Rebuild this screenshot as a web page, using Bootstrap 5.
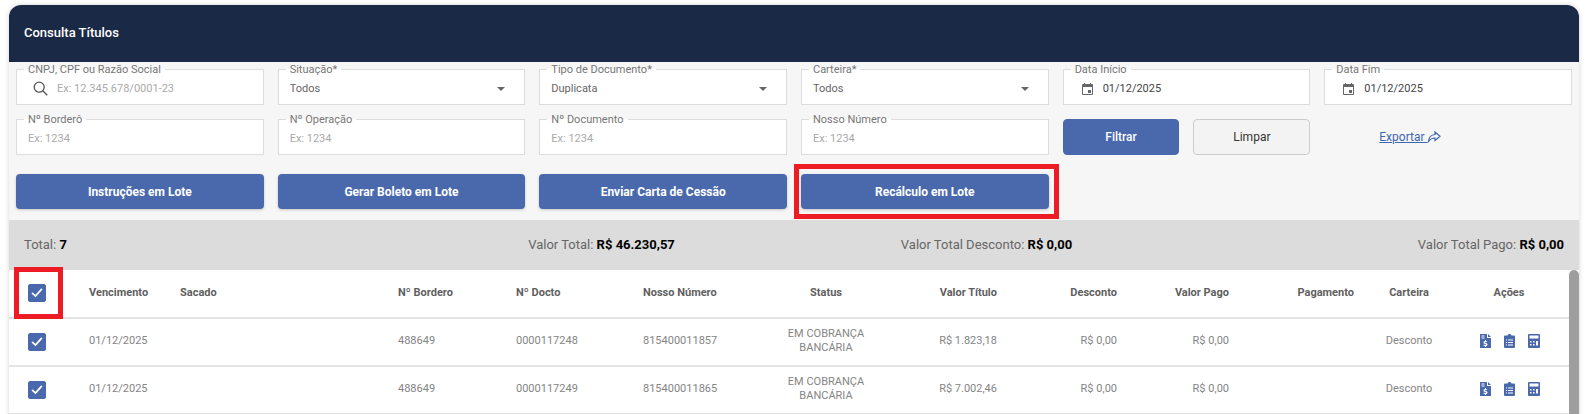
<!DOCTYPE html>
<html lang="pt-BR">
<head>
<meta charset="utf-8">
<title>Consulta Títulos</title>
<link href="https://cdn.jsdelivr.net/npm/bootstrap@5.3.0/dist/css/bootstrap.min.css" rel="stylesheet">
<style>
html,body{height:414px;overflow:hidden;background:#fff;}
body{font-family:Roboto,"Liberation Sans",sans-serif;font-size:11px;color:#666;}
.sheet{margin:5px 9px 0;border:0;border-radius:12px 12px 0 0;box-shadow:0 0 5px rgba(0,0,0,.18);overflow:hidden;height:420px;background:#fff;}
.sheet-head{height:57px;background:#1a2945;color:#fff;font-size:13px;font-weight:500;padding:0 15px 2px;border:0;border-radius:0!important;}
.filters{background:#f6f6f6;padding:0 7px 11px;position:relative;}
.filters .row{--bs-gutter-x:14px;--bs-gutter-y:0;}
.gap-row{margin-top:7px;}
.btn-row{margin-top:19px;}
.outfield{height:43px;margin:0;padding:0 11px 4px;min-width:0;background:#fff;border:1px solid #dcdcdc;display:flex;align-items:center;}
.outfield legend{float:none;width:auto;padding:1px 4px 0;font-size:11px;line-height:14px;color:#777;margin:0 0 0 -4px;}
.outfield input,.outfield select{border:0;outline:0;background:transparent;padding:0;font-size:11px;color:#666;height:20px;width:100%;min-width:0;appearance:none;box-shadow:none;border-radius:0;font-family:inherit;}
.outfield input::placeholder{color:#aaa;opacity:1;}
.outfield select{margin-top:2px;}
.outfield .dateval{color:#444;}
.fieldicon{flex:none;display:block;}
.searchmark{margin:0 9px 0 5px;}
.datemark{margin:0 10px 0 7px;}
.caretdown{flex:none;width:0;height:0;border-left:4.500px solid transparent;border-right:4.500px solid transparent;border-top:4px solid #666;margin-right:8px;}
.blue-btn{background:#4a69ad;border:0;color:#fff;font-size:12px;font-weight:700;height:35px;width:100%;border-radius:4px;padding:0;box-shadow:0 1px 3px rgba(0,0,0,.2);}
.blue-btn:hover{background:#4a69ad;color:#fff;}
.act-btn{height:36px;font-size:12px;border-radius:4px;padding:0;width:100%;font-weight:500;}
.act-primary{background:#4a69ad;border:1px solid #4a69ad;color:#fff;}
.act-plain{background:#f3f3f3;border:1px solid #ccc;color:#333;font-weight:400;}
.export-link{color:#3f66b3;font-size:12px;text-decoration:underline;padding-left:55px;height:36px;display:flex;align-items:center;}
.export-link svg{margin-left:-1px;}
.flagbox{position:absolute;border:5px solid #ed1c24;pointer-events:none;}
.flag-btn{left:-7px;right:-10px;top:-10px;bottom:-10px;}
.flag-chk{left:-14px;top:-17px;width:49px;height:52px;}
.totals{background:#dcdcdc;height:50px;padding:0 15px;font-size:13px;color:#666;}
.totals b{color:#000;font-weight:700;}
.grid-wrap{display:flex;height:144px;background:#fff;}
.grid-main{flex:1 1 auto;min-width:0;}
.fakebar{flex:none;width:10px;background:#9e9e9e;border-radius:5px 5px 0 0;}
.titles{table-layout:fixed;width:1560px;margin:0;border-collapse:collapse;}
.titles th,.titles td{height:48px;padding:0 8px 2px;vertical-align:middle;border:0;border-bottom:2px solid #e3e3e3;font-size:11px;line-height:14px;background:#fff;box-shadow:none;}
.titles th{color:#5f5f5f;font-weight:700;}
.titles td{color:#858585;}
.titles .cell-chk{padding:0 0 1px 19px;position:relative;}
.chk-holder{position:relative;display:inline-block;width:18px;height:18px;vertical-align:middle;}
.titles .form-check-input{width:18px;height:18px;margin:0;display:block;border-radius:2px;background-color:#4a69ad;border:1px solid #4a69ad;background-size:100% 100%;background-image:url("data:image/svg+xml,%3csvg xmlns='http://www.w3.org/2000/svg' viewBox='0 0 18 18'%3e%3cpath fill='none' stroke='%23fff' stroke-width='2' stroke-linecap='round' d='M4 9.500L7.300 12.500L14 5'/%3e%3c/svg%3e");}
.titles .cell-act{padding-right:15px;}
.act-icons{display:flex;justify-content:center;gap:13px;align-items:center;margin-left:2px;}
.act-icons svg{display:block;fill:#4a69ad;}
</style>
</head>
<body>
<div class="card sheet">
  <div class="card-header sheet-head d-flex align-items-center">Consulta Títulos</div>
  <div class="filters">
    <div class="row">
      <div class="col-2"><fieldset class="outfield"><legend>CNPJ, CPF ou Razão Social</legend>
        <svg class="fieldicon searchmark" width="15" height="15" viewBox="0 0 15 15" fill="none" stroke="#555" stroke-width="1.3"><circle cx="6.2" cy="6.2" r="5"/><path d="M10 10l4.300 4.300"/></svg>
        <input type="text" placeholder="Ex: 12.345.678/0001-23"></fieldset></div>
      <div class="col-2"><fieldset class="outfield"><legend>Situação*</legend><select><option>Todos</option></select><span class="caretdown"></span></fieldset></div>
      <div class="col-2"><fieldset class="outfield"><legend>Tipo de Documento*</legend><select><option>Duplicata</option></select><span class="caretdown"></span></fieldset></div>
      <div class="col-2"><fieldset class="outfield"><legend>Carteira*</legend><select><option>Todos</option></select><span class="caretdown"></span></fieldset></div>
      <div class="col-2"><fieldset class="outfield"><legend>Data Início</legend>
        <svg class="fieldicon datemark" width="11" height="12" viewBox="0 0 11 12" fill="#666"><path d="M2 0h1v1h5V0h1v1h1a1 1 0 0 1 1 1v9a1 1 0 0 1-1 1H1a1 1 0 0 1-1-1V2a1 1 0 0 1 1-1h1zM1 4v7h9V4zm5 3h3v3H6z"/></svg>
        <input class="dateval" type="text" value="01/12/2025"></fieldset></div>
      <div class="col-2"><fieldset class="outfield"><legend>Data Fim</legend>
        <svg class="fieldicon datemark" width="11" height="12" viewBox="0 0 11 12" fill="#666"><path d="M2 0h1v1h5V0h1v1h1a1 1 0 0 1 1 1v9a1 1 0 0 1-1 1H1a1 1 0 0 1-1-1V2a1 1 0 0 1 1-1h1zM1 4v7h9V4zm5 3h3v3H6z"/></svg>
        <input class="dateval" type="text" value="01/12/2025"></fieldset></div>
    </div>
    <div class="row gap-row">
      <div class="col-2"><fieldset class="outfield"><legend>Nº Borderô</legend><input type="text" placeholder="Ex: 1234"></fieldset></div>
      <div class="col-2"><fieldset class="outfield"><legend>Nº Operação</legend><input type="text" placeholder="Ex: 1234"></fieldset></div>
      <div class="col-2"><fieldset class="outfield"><legend>Nº Documento</legend><input type="text" placeholder="Ex: 1234"></fieldset></div>
      <div class="col-2"><fieldset class="outfield"><legend>Nosso Número</legend><input type="text" placeholder="Ex: 1234"></fieldset></div>
      <div class="col-2 d-flex align-items-end">
        <div class="row flex-grow-1">
          <div class="col-6"><button type="button" class="btn act-btn act-primary">Filtrar</button></div>
          <div class="col-6"><button type="button" class="btn act-btn act-plain">Limpar</button></div>
        </div>
      </div>
      <div class="col-2 d-flex align-items-end">
        <a class="export-link" href="#">Exportar&nbsp;<svg width="14" height="12" viewBox="0 0 14 12" fill="none" stroke="#3f66b3" stroke-width="1.200"><path d="M8 1l5 4.200-5 4.200V7C5.500 7 3.500 7.800 1.500 10.500 1.800 6.500 4 3.800 8 3.500z"/></svg></a>
      </div>
    </div>
    <div class="row btn-row">
      <div class="col-2"><button type="button" class="btn blue-btn">Instruções em Lote</button></div>
      <div class="col-2"><button type="button" class="btn blue-btn">Gerar Boleto em Lote</button></div>
      <div class="col-2"><button type="button" class="btn blue-btn">Enviar Carta de Cessão</button></div>
      <div class="col-2"><div class="position-relative"><button type="button" class="btn blue-btn">Recálculo em Lote</button><span class="flagbox flag-btn"></span></div></div>
    </div>
  </div>
  <div class="row g-0 totals align-items-center">
    <div class="col-3 text-start">Total: <b>7</b></div>
    <div class="col-3 text-center">Valor Total: <b>R$ 46.230,57</b></div>
    <div class="col-3 text-center">Valor Total Desconto: <b>R$ 0,00</b></div>
    <div class="col-3 text-end">Valor Total Pago: <b>R$ 0,00</b></div>
  </div>
  <div class="grid-wrap">
    <div class="grid-main">
      <table class="table titles">
        <colgroup><col style="width:72px"><col style="width:91px"><col style="width:218px"><col style="width:118px"><col style="width:127px"><col style="width:121px"><col style="width:140px"><col style="width:109px"><col style="width:120px"><col style="width:112px"><col style="width:125px"><col style="width:94px"><col style="width:113px"></colgroup>
        <thead><tr>
          <th class="cell-chk"><span class="chk-holder"><input class="form-check-input" type="checkbox" checked aria-label="Selecionar todos"><span class="flagbox flag-chk"></span></span></th>
          <th>Vencimento</th><th>Sacado</th><th>Nº Bordero</th><th>Nº Docto</th><th>Nosso Número</th>
          <th class="text-center">Status</th><th class="text-end">Valor Título</th><th class="text-end">Desconto</th><th class="text-end">Valor Pago</th><th class="text-end">Pagamento</th><th class="text-center">Carteira</th><th class="text-center cell-act">Ações</th>
        </tr></thead>
        <tbody>
          <tr>
            <td class="cell-chk"><span class="chk-holder"><input class="form-check-input" type="checkbox" checked aria-label="Selecionar"></span></td>
            <td>01/12/2025</td><td></td><td>488649</td><td>0000117248</td><td>815400011857</td>
            <td class="text-center">EM COBRANÇA BANCÁRIA</td><td class="text-end">R$ 1.823,18</td><td class="text-end">R$ 0,00</td><td class="text-end">R$ 0,00</td><td></td><td class="text-center">Desconto</td>
            <td class="cell-act"><div class="act-icons">
              <svg width="11" height="14" viewBox="0 0 11 14"><path d="M0 0h7v4h4v10H0zM8 0l3 3H8zM1.500 1.500v1h3v-1zM1.500 3.500v1h3v-1zM5 6v.9c-.9.2-1.500.8-1.500 1.600 0 1.800 2.600 1.200 2.600 2 0 .3-.3.5-.9.5-.5 0-1-.2-1.300-.4l-.4.9c.4.2.9.4 1.500.5v.9h1v-.9c.9-.2 1.500-.8 1.500-1.600 0-1.800-2.600-1.200-2.600-2 0-.3.3-.4.8-.4s.9.1 1.200.3l.3-.9c-.3-.2-.7-.3-1.200-.4V6z" fill-rule="evenodd"/></svg>
              <svg width="11" height="14" viewBox="0 0 11 14"><path d="M3.500 1.500C3.700.6 4.500 0 5.500 0s1.800.6 2 1.500H10a1 1 0 0 1 1 1V13a1 1 0 0 1-1 1H1a1 1 0 0 1-1-1V2.500a1 1 0 0 1 1-1zM2 5.500v1h1v-1zm2 0v1h5v-1zM2 8v1h1V8zm2 0v1h5V8zM2 10.500v1h1v-1zm2 0v1h5v-1z" fill-rule="evenodd"/></svg>
              <svg width="12" height="14" viewBox="0 0 12 14"><path d="M1 0h10a1 1 0 0 1 1 1v12a1 1 0 0 1-1 1H1a1 1 0 0 1-1-1V1a1 1 0 0 1 1-1zm.5 1.500v3h9v-3zM2 7v1.500h1.500V7zm3 0v1.500h1.500V7zm3 0v4.500h2V7zM2 10v1.500h1.500V10zm3 0v1.500h1.500V10z" fill-rule="evenodd"/></svg>
            </div></td>
          </tr>
          <tr>
            <td class="cell-chk"><span class="chk-holder"><input class="form-check-input" type="checkbox" checked aria-label="Selecionar"></span></td>
            <td>01/12/2025</td><td></td><td>488649</td><td>0000117249</td><td>815400011865</td>
            <td class="text-center">EM COBRANÇA BANCÁRIA</td><td class="text-end">R$ 7.002,46</td><td class="text-end">R$ 0,00</td><td class="text-end">R$ 0,00</td><td></td><td class="text-center">Desconto</td>
            <td class="cell-act"><div class="act-icons">
              <svg width="11" height="14" viewBox="0 0 11 14"><path d="M0 0h7v4h4v10H0zM8 0l3 3H8zM1.500 1.500v1h3v-1zM1.500 3.500v1h3v-1zM5 6v.9c-.9.2-1.500.8-1.500 1.600 0 1.800 2.600 1.200 2.600 2 0 .3-.3.5-.9.5-.5 0-1-.2-1.300-.4l-.4.9c.4.2.9.4 1.500.5v.9h1v-.9c.9-.2 1.500-.8 1.500-1.600 0-1.800-2.600-1.200-2.600-2 0-.3.3-.4.8-.4s.9.1 1.200.3l.3-.9c-.3-.2-.7-.3-1.200-.4V6z" fill-rule="evenodd"/></svg>
              <svg width="11" height="14" viewBox="0 0 11 14"><path d="M3.500 1.500C3.700.6 4.500 0 5.500 0s1.800.6 2 1.500H10a1 1 0 0 1 1 1V13a1 1 0 0 1-1 1H1a1 1 0 0 1-1-1V2.500a1 1 0 0 1 1-1zM2 5.500v1h1v-1zm2 0v1h5v-1zM2 8v1h1V8zm2 0v1h5V8zM2 10.500v1h1v-1zm2 0v1h5v-1z" fill-rule="evenodd"/></svg>
              <svg width="12" height="14" viewBox="0 0 12 14"><path d="M1 0h10a1 1 0 0 1 1 1v12a1 1 0 0 1-1 1H1a1 1 0 0 1-1-1V1a1 1 0 0 1 1-1zm.5 1.500v3h9v-3zM2 7v1.500h1.500V7zm3 0v1.500h1.500V7zm3 0v4.500h2V7zM2 10v1.500h1.500V10zm3 0v1.500h1.500V10z" fill-rule="evenodd"/></svg>
            </div></td>
          </tr>
        </tbody>
      </table>
    </div>
    <div class="fakebar"></div>
  </div>
</div>
<script src="https://cdn.jsdelivr.net/npm/bootstrap@5.3.0/dist/js/bootstrap.bundle.min.js"></script>
</body>
</html>
